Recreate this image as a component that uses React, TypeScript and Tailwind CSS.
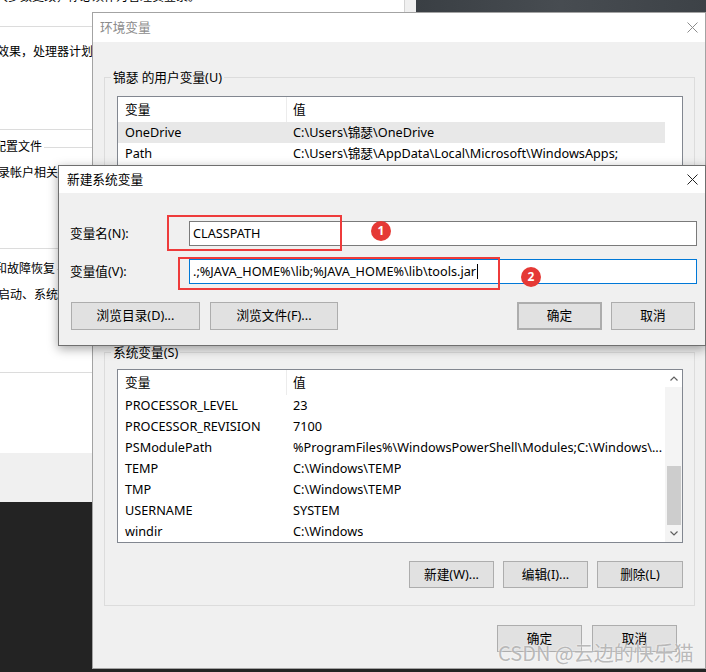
import React from "react";

const userVars = [
  { name: "OneDrive", value: "C:\\Users\\锦瑟\\OneDrive", selected: true },
  { name: "Path", value: "C:\\Users\\锦瑟\\AppData\\Local\\Microsoft\\WindowsApps;" },
  { name: "TEMP", value: "C:\\Users\\锦瑟\\AppData\\Local\\Temp" },
  { name: "TMP", value: "C:\\Users\\锦瑟\\AppData\\Local\\Temp" },
];

const sysVars = [
  { name: "PROCESSOR_LEVEL", value: "23" },
  { name: "PROCESSOR_REVISION", value: "7100" },
  { name: "PSModulePath", value: "%ProgramFiles%\\WindowsPowerShell\\Modules;C:\\Windows\\..." },
  { name: "TEMP", value: "C:\\Windows\\TEMP" },
  { name: "TMP", value: "C:\\Windows\\TEMP" },
  { name: "USERNAME", value: "SYSTEM" },
  { name: "windir", value: "C:\\Windows" },
];

type Row = { name: string; value: string; selected?: boolean };

function CloseX({ color }: { color: string }) {
  return (
    <svg width="11" height="11" viewBox="0 0 11 11" fill="none" stroke={color} strokeWidth="1">
      <path d="M0.5 0.5 L10.5 10.5 M10.5 0.5 L0.5 10.5" />
    </svg>
  );
}

function Btn({ label, className = "" }: { label: string; className?: string }) {
  return (
    <div className={`flex items-center justify-center bg-[#e1e1e1] border border-[#adadad] ${className}`}>
      {label}
    </div>
  );
}

function VarList({ rows, scroll }: { rows: Row[]; scroll?: boolean }) {
  return (
    <div className="flex w-[566px] h-[174px] border border-[#828790] bg-white overflow-hidden">
      <div className="flex-1 flex flex-col min-w-0">
        <div className="flex h-[25px] shrink-0 items-center">
          <div className="w-[169px] h-full flex items-center pl-[7px] border-r border-[#ececec]">变量</div>
          <div className="pl-[6px]">值</div>
        </div>
        {rows.map((r, i) => (
          <div
            key={i}
            className={`flex h-[21px] shrink-0 items-center ${r.selected ? "bg-[#e8e8e8]" : ""}`}
          >
            <div className="w-[169px] shrink-0 pl-[7px] whitespace-nowrap">{r.name}</div>
            <div className="pl-[6px] whitespace-nowrap overflow-hidden">{r.value}</div>
          </div>
        ))}
      </div>
      {scroll ? (
        <div className="w-[17px] flex flex-col bg-[#f4f4f4]">
          <div className="h-[17px] flex items-center justify-center bg-white">
            <svg width="8" height="5" viewBox="0 0 8 5" fill="none" stroke="#606060" strokeWidth="1.2">
              <path d="M0.5 4.5 L4 1 L7.5 4.5" />
            </svg>
          </div>
          <div className="flex-1 flex flex-col justify-end items-center">
            <div className="w-[14px] h-[59px] bg-[#cdcdcd]" />
          </div>
          <div className="h-[17px] flex items-center justify-center">
            <svg width="8" height="5" viewBox="0 0 8 5" fill="none" stroke="#606060" strokeWidth="1.2">
              <path d="M0.5 0.5 L4 4 L7.5 0.5" />
            </svg>
          </div>
        </div>
      ) : (
        <div className="w-[17px]" />
      )}
    </div>
  );
}

function BackWindow() {
  return (
    <div className="absolute left-0 top-0 w-[416px] h-[502px] bg-[#f0f0f0]">
      <div className="w-[405px] h-[453px] bg-white border-r border-[#d4d4d4] overflow-hidden flex flex-col text-[12px] leading-[16px]">
        <div className="-mt-[11px] -ml-[4px] h-[16px] whitespace-nowrap">大多数更改，你必须作为管理员登录。</div>
        <div className="mt-[21px] h-px bg-[#dcdcdc]" />
        <div className="mt-[17px] -ml-[27px] whitespace-nowrap">视觉效果，处理器计划，内存使用，以及虚拟内存</div>
        <div className="mt-[69px] h-px bg-[#dcdcdc]" />
        <div className="mt-[9px] -ml-[30px] flex items-center">
          <span className="whitespace-nowrap">用户配置文件</span>
          <div className="flex-1 ml-[2px] h-px bg-[#dcdcdc]" />
        </div>
        <div className="mt-[10px] -ml-[26px] whitespace-nowrap">与登录帐户相关的桌面设置</div>
        <div className="mt-[67px] h-px bg-[#dcdcdc]" />
        <div className="mt-[12px] -ml-[29px] flex items-center">
          <span className="whitespace-nowrap">启动和故障恢复</span>
          <div className="flex-1 ml-[2px] h-px bg-[#dcdcdc]" />
        </div>
        <div className="mt-[10px] -ml-[26px] whitespace-nowrap">系统启动、系统故障和调试信息</div>
        <div className="mt-[69px] h-px bg-[#dcdcdc]" />
      </div>
    </div>
  );
}

function EnvDialog() {
  return (
    <div className="absolute left-[92px] top-[12px] w-[614px] h-[657px] border border-[#a3a3a3] bg-[#f0f0f0] flex flex-col">
      <div className="h-[29px] shrink-0 bg-white flex items-center justify-between pl-[7px] pr-[7px]">
        <span className="text-[#8c8c8c]">环境变量</span>
        <CloseX color="#8c8c8c" />
      </div>

      <fieldset className="mt-[27px] ml-[11px] w-[591px] h-[266px] shrink-0 border border-[#dcdcdc] pl-[12px] pr-[11px]">
        <legend className="-ml-[6px] px-[2px] leading-[16px]">锦瑟 的用户变量(U)</legend>
        <div className="mt-[11px]">
          <VarList rows={userVars} />
        </div>
        <div className="mt-[16px] flex justify-end gap-[9px]">
          <Btn label="新建(N)..." className="w-[85px] h-[27px]" />
          <Btn label="编辑(E)..." className="w-[85px] h-[27px]" />
          <Btn label="删除(D)" className="w-[86px] h-[27px]" />
        </div>
      </fieldset>

      <fieldset className="mt-[9px] ml-[11px] w-[591px] h-[262px] shrink-0 border border-[#dcdcdc] pl-[12px] pr-[11px]">
        <legend className="-ml-[6px] px-[2px] leading-[16px]">系统变量(S)</legend>
        <div className="mt-[9px]">
          <VarList rows={sysVars} scroll />
        </div>
        <div className="mt-[18px] flex justify-end gap-[9px]">
          <Btn label="新建(W)..." className="w-[85px] h-[27px]" />
          <Btn label="编辑(I)..." className="w-[85px] h-[27px]" />
          <Btn label="删除(L)" className="w-[86px] h-[27px]" />
        </div>
      </fieldset>

      <div className="mt-[19px] pr-[28px] flex justify-end gap-[10px]">
        <Btn label="确定" className="w-[85px] h-[27px]" />
        <Btn label="取消" className="w-[85px] h-[27px]" />
      </div>
    </div>
  );
}

function NewDialog() {
  return (
    <div className="absolute left-[58px] top-[165px] w-[648px] h-[181px] border border-[#6f6f6f] bg-[#f0f0f0] shadow-[0_3px_10px_rgba(0,0,0,0.35)] flex flex-col">
      <div className="h-[27px] shrink-0 bg-white flex items-center justify-between pl-[8px] pr-[7px]">
        <span>新建系统变量</span>
        <CloseX color="#222222" />
      </div>
      <div className="pt-[28px] flex flex-col">
        <div className="flex items-center">
          <div className="w-[130px] pl-[11px]">变量名(N):</div>
          <div className="flex-1 mr-[8px] h-[25px] border border-[#7a7a7a] bg-white flex items-center px-[3px]">
            CLASSPATH
          </div>
        </div>
        <div className="mt-[13px] flex items-center">
          <div className="w-[130px] pl-[11px]">变量值(V):</div>
          <div className="flex-1 mr-[8px] h-[25px] border border-[#0078d7] bg-white flex items-center px-[3px] whitespace-nowrap">
            .;%JAVA_HOME%\lib;%JAVA_HOME%\lib\tools.jar
            <span className="ml-px w-px h-[15px] bg-black" />
          </div>
        </div>
        <div className="mt-[18px] flex items-center pl-[12px] pr-[10px]">
          <Btn label="浏览目录(D)..." className="w-[129px] h-[28px]" />
          <Btn label="浏览文件(F)..." className="ml-[10px] w-[128px] h-[28px]" />
          <Btn label="确定" className="ml-auto w-[85px] h-[28px] border-2 border-[#0078d7]" />
          <Btn label="取消" className="ml-[9px] w-[84px] h-[28px]" />
        </div>
      </div>
    </div>
  );
}

export default function App() {
  return (
    <div className="relative w-[706px] h-[672px] overflow-hidden bg-[#232323] text-[12.7px] text-black font-['Noto_Sans','Noto_Sans_CJK_SC',sans-serif]">
      <BackWindow />
      <div className="absolute left-[416px] top-0 w-[290px] h-[20px] bg-gradient-to-r from-[#3a3f44] via-[#474c51] to-[#3d4247]" />
      <EnvDialog />
      <NewDialog />

      {/* annotations */}
      <div className="absolute left-[167px] top-[215px] w-[175px] h-[36px] border-2 border-[#ee3b3b]" />
      <div className="absolute left-[178px] top-[257px] w-[322px] h-[33px] border-2 border-[#ee3b3b]" />
      <div className="absolute left-[371px] top-[221px] w-[20px] h-[20px] rounded-full bg-[#e53935] text-white text-[12px] font-bold flex items-center justify-center">
        1
      </div>
      <div className="absolute left-[521px] top-[267px] w-[20px] h-[20px] rounded-full bg-[#e53935] text-white text-[12px] font-bold flex items-center justify-center">
        2
      </div>

      <div className="absolute left-[498px] top-[640px] text-[20px] leading-[26px] text-[#a8a8a8]/80 whitespace-nowrap font-['Noto_Sans_CJK_SC',sans-serif] [text-shadow:0_0_2px_#ffffff]">
        CSDN @云边的快乐猫
      </div>
    </div>
  );
}
